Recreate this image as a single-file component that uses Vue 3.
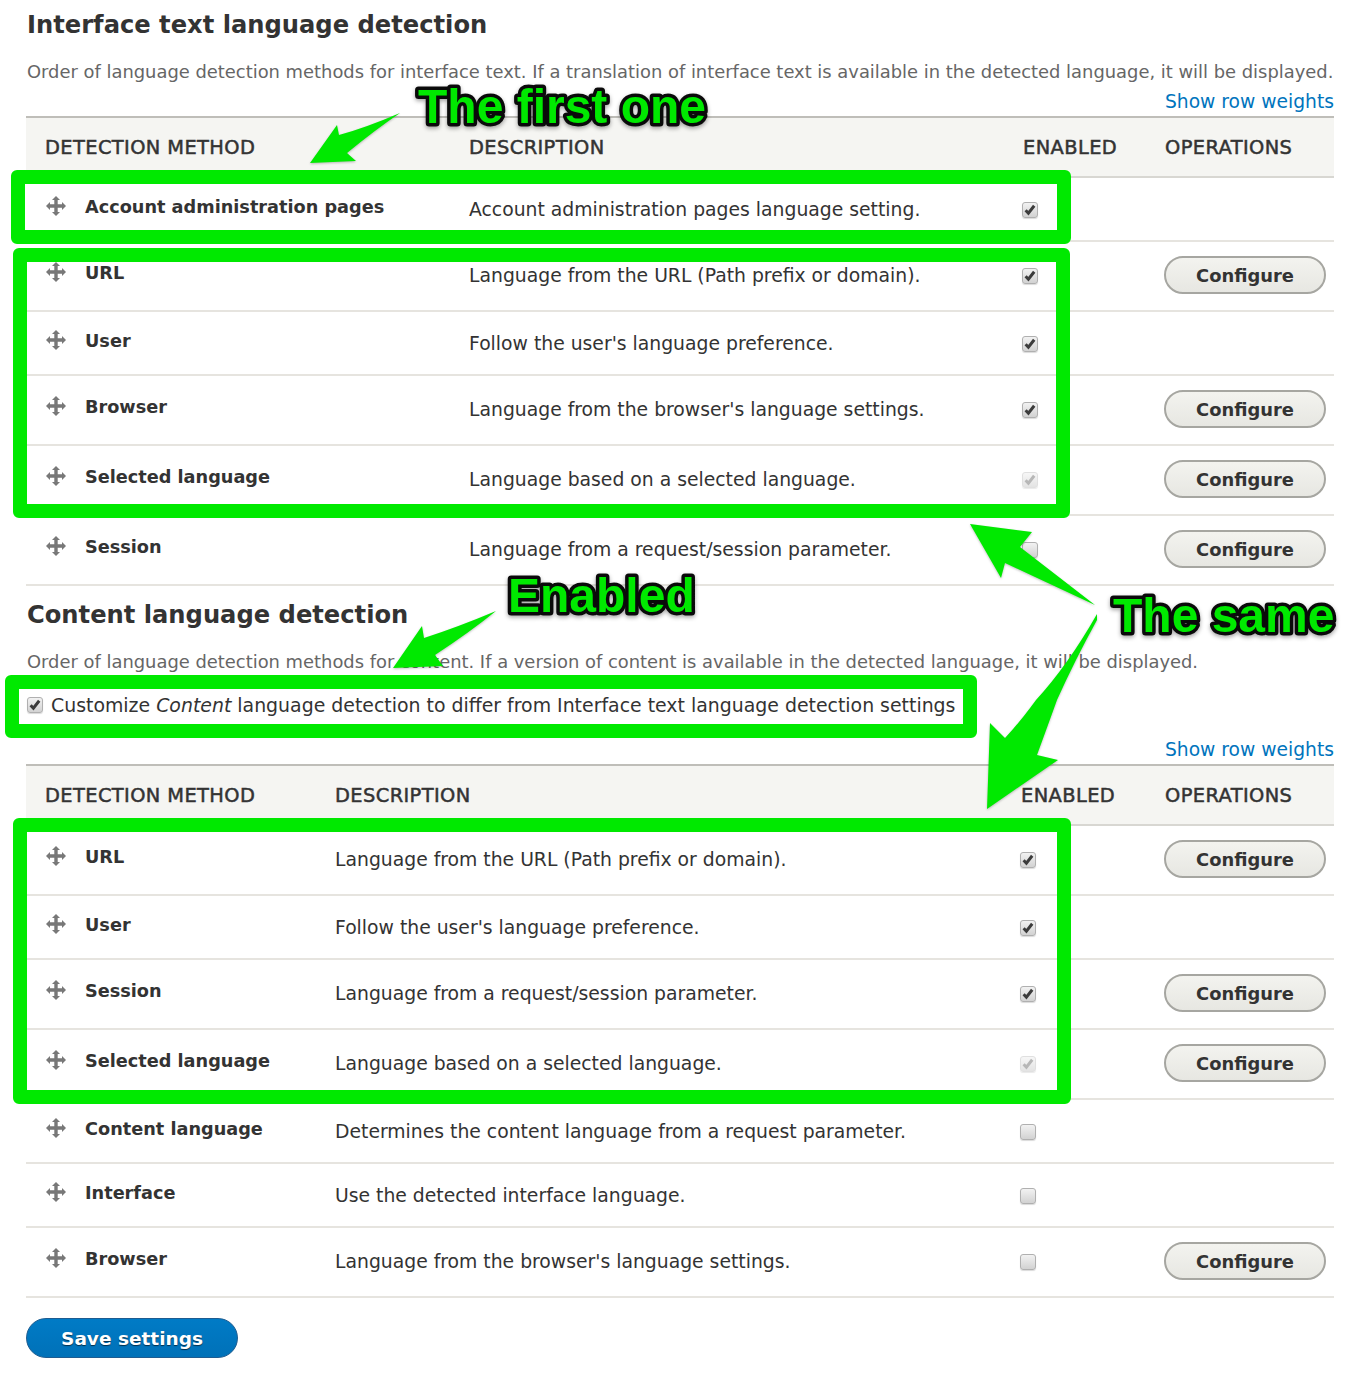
<script setup>
const first = [
  { t: 'Account administration pages', d: 'Account administration pages language setting.', c: 'on', b: false },
  { t: 'URL', d: 'Language from the URL (Path prefix or domain).', c: 'on', b: true },
  { t: 'User', d: "Follow the user's language preference.", c: 'on', b: false },
  { t: 'Browser', d: "Language from the browser's language settings.", c: 'on', b: true },
  { t: 'Selected language', d: 'Language based on a selected language.', c: 'dis', b: true },
  { t: 'Session', d: 'Language from a request/session parameter.', c: 'off', b: true },
]
const second = [
  { t: 'URL', d: 'Language from the URL (Path prefix or domain).', c: 'on', b: true },
  { t: 'User', d: "Follow the user's language preference.", c: 'on', b: false },
  { t: 'Session', d: 'Language from a request/session parameter.', c: 'on', b: true },
  { t: 'Selected language', d: 'Language based on a selected language.', c: 'dis', b: true },
  { t: 'Content language', d: 'Determines the content language from a request parameter.', c: 'off', b: false },
  { t: 'Interface', d: 'Use the detected interface language.', c: 'off', b: false },
  { t: 'Browser', d: "Language from the browser's language settings.", c: 'off', b: true },
]
const tables = [
  { cls: 'wide', rows: first },
  { cls: 'narrow', rows: second },
]
const handle = 'M10 0 L14 4 L11.7 4 L11.7 8.3 L16 8.3 L16 6 L20 10 L16 14 L16 11.7 L11.7 11.7 L11.7 16 L14 16 L10 20 L6 16 L8.3 16 L8.3 11.7 L4 11.7 L4 14 L0 10 L4 6 L4 8.3 L8.3 8.3 L8.3 4 L6 4 Z'
</script>

<template>
  <div class="page">
    <h2 class="title">Interface text language detection</h2>
    <p class="desc">Order of language detection methods for interface text. If a translation of interface text is available in the detected language, it will be displayed.</p>
    <div class="weights"><a>Show row weights</a></div>
    <div class="table" :class="tables[0].cls">
      <div class="row head">
        <div>Detection method</div><div>Description</div><div>Enabled</div><div>Operations</div>
      </div>
      <div v-for="r in tables[0].rows" :key="r.t" class="row" :class="{ tall: r.b }">
        <div class="name">
          <svg class="handle" viewBox="0 0 20 20"><path :d="handle" /></svg>
          <span>{{ r.t }}</span>
        </div>
        <div class="text">{{ r.d }}</div>
        <div class="checkcell"><span class="check" :class="r.c"><svg v-if="r.c !== 'off'" viewBox="0 0 16 16"><path d="M3.6 8.2 L6.4 11.2 L12.2 3.8" /></svg></span></div>
        <div class="ops"><span v-if="r.b" class="btn">Configure</span></div>
      </div>
    </div>

    <h2 class="title second">Content language detection</h2>
    <p class="desc tight">Order of language detection methods for content. If a version of content is available in the detected language, it will be displayed.</p>
    <label class="customize">
      <span class="check on"><svg viewBox="0 0 16 16"><path d="M3.6 8.2 L6.4 11.2 L12.2 3.8" /></svg></span>
      <span>Customize <em>Content</em> language detection to differ from Interface text language detection settings</span>
    </label>
    <div class="weights two"><a>Show row weights</a></div>
    <div class="table" :class="tables[1].cls">
      <div class="row head">
        <div>Detection method</div><div>Description</div><div>Enabled</div><div>Operations</div>
      </div>
      <div v-for="r in tables[1].rows" :key="r.t" class="row" :class="{ tall: r.b }">
        <div class="name">
          <svg class="handle" viewBox="0 0 20 20"><path :d="handle" /></svg>
          <span>{{ r.t }}</span>
        </div>
        <div class="text">{{ r.d }}</div>
        <div class="checkcell"><span class="check" :class="r.c"><svg v-if="r.c !== 'off'" viewBox="0 0 16 16"><path d="M3.6 8.2 L6.4 11.2 L12.2 3.8" /></svg></span></div>
        <div class="ops"><span v-if="r.b" class="btn">Configure</span></div>
      </div>
    </div>
    <div class="actions"><span class="save">Save settings</span></div>

    <div class="box b1"></div>
    <div class="box b2"></div>
    <div class="box b3"></div>
    <div class="box b4"></div>
    <svg class="arrows" viewBox="0 0 1366 1382">
      <path d="M400 113 Q365 128 339 135 L337 125 L310 163 L356 161 L347 153 Q375 130 400 113 Z" />
      <path d="M496 611 Q458 627 424 638 L422 626 L393 668 L443 666 L435 655 Q470 632 496 611 Z" />
      <path d="M1095 605 L1005 563 L1001 578 L970 524 L1032 532 L1020 547 Z" />
      <path d="M1097 614 Q1068 665 1036 700 Q1020 722 1005 738 L990 723 L987 809 L1058 760 L1037 755 Q1048 725 1057 700 Q1075 660 1097 620 Z" />
      <text x="418" y="123">The first one</text>
      <text x="508" y="612">Enabled</text>
      <text x="1113" y="632">The same</text>
    </svg>
  </div>
</template>

<style>
body { background: #fff; }
</style>

<style scoped>
.page {
  position: relative;
  box-sizing: border-box;
  width: 1366px;
  height: 1382px;
  padding: 0 32px 0 26px;
  font-family: "DejaVu Sans", sans-serif;
  font-size: 18.8px;
  color: #333;
  overflow: hidden;
}
.title {
  margin: 0;
  height: 48px;
  line-height: 48px;
  padding-left: 1px;
  font-size: 24.2px;
  font-weight: 700;
  color: #333;
}
.title:first-child { line-height: 50px; }
.title.second { margin-top: 5px; }
.desc {
  margin: 9px 0 0;
  height: 28px;
  line-height: 30px;
  padding-left: 1px;
  font-size: 17.9px;
  color: #666;
  white-space: nowrap;
}
.desc.tight { margin-top: 8px; }
.weights {
  margin-top: 2px;
  height: 29px;
  line-height: 30px;
  text-align: right;
  font-size: 18.7px;
  color: #0074bd;
}
.weights.two { margin-top: 16px; }
.table { display: flex; flex-direction: column; }
.row {
  display: grid;
  align-items: center;
  min-height: 62px;
  border-bottom: 2px solid #e6e4df;
}
.wide .row { grid-template-columns: 424px 554px 142px 188px; }
.narrow .row { grid-template-columns: 290px 686px 144px 188px; }
.row > div { padding-left: 19px; }
.row > .text { margin-top: -2px; }
.row:not(.tall):not(.head) > .text,
.row:not(.tall):not(.head) > .name { padding-top: 2px; }
.head {
  min-height: 58px;
  border-top: 2px solid #bfbeb9;
  border-bottom: 2px solid #d8d7d2;
  background: #f5f5f2;
  font-size: 19.4px;
  letter-spacing: 0.4px;
  text-transform: uppercase;
  -webkit-text-stroke: 0.5px #333;
}
.name {
  display: flex;
  align-items: center;
  gap: 19px;
  font-size: 17.7px;
  font-weight: 700;
  margin-top: -6px;
}
.handle { width: 20px; height: 20px; flex: none; margin: -3px 0 0 1px; }
.handle path { fill: #787878; }
.checkcell { display: flex; }
.row:not(.tall) > .checkcell { padding-top: 2px; }
.wide .checkcell, .narrow .checkcell { padding-left: 18px !important; }
.check {
  display: block;
  width: 16px;
  height: 16px;
  box-sizing: border-box;
  border: 1px solid #b0b0b0;
  border-radius: 3px;
  background: linear-gradient(#f2f2f2, #d2d2d2);
  box-shadow: 0 1px 1px rgba(0, 0, 0, 0.15);
  flex: none;
  position: relative;
}
.check svg { position: absolute; left: -1px; top: -1px; width: 16px; height: 16px; }
.check path { fill: none; stroke: #3c3c3c; stroke-width: 3; }
.check.dis { opacity: 0.6; border-color: #ccc; }
.check.dis path { stroke: #888; }
.ops { padding-left: 18px !important; padding-top: 14px; padding-bottom: 16px; display: flex; min-height: 0; }
.btn {
  box-sizing: border-box;
  width: 162px;
  height: 38px;
  line-height: 36px;
  text-align: center;
  border: 2px solid #a6a6a1;
  border-radius: 20px;
  background: linear-gradient(#f3f3ef, #e7e7e2);
  font-size: 17.9px;
  font-weight: 700;
  color: #333;
}
.customize {
  display: flex;
  align-items: center;
  gap: 8px;
  height: 28px;
  margin-top: 16px;
  color: #333;
  white-space: nowrap;
  padding-left: 1px;
  font-size: 18.9px;
}
.actions { margin-top: 20px; }
.save {
  display: block;
  box-sizing: border-box;
  width: 212px;
  height: 40px;
  line-height: 40px;
  text-align: center;
  border: 1px solid #1e5c90;
  border-radius: 20px;
  background: linear-gradient(#007bc6, #0071b8);
  color: #fff;
  font-size: 18.5px;
  font-weight: 700;
  text-shadow: 0 1px 1px rgba(0, 0, 0, 0.6);
}
.box {
  position: absolute;
  box-sizing: border-box;
  border: 14px solid #00e900;
  border-radius: 6px;
}
.b1 { left: 11px; top: 170px; width: 1060px; height: 74px; }
.b2 { left: 13px; top: 248px; width: 1057px; height: 270px; }
.b3 { left: 5px; top: 675px; width: 972px; height: 63px; }
.b4 { left: 13px; top: 818px; width: 1058px; height: 286px; }
.arrows {
  position: absolute;
  left: 0;
  top: 0;
  width: 1366px;
  height: 1382px;
  pointer-events: none;
}
.arrows path { fill: #00e900; filter: drop-shadow(0 1px 1px rgba(0, 0, 0, 0.25)); }
.arrows text {
  font-family: "Liberation Sans", sans-serif;
  font-size: 48px;
  font-weight: 700;
  fill: #00e900;
  stroke: #0a0a0a;
  stroke-width: 7px;
  stroke-linejoin: round;
  paint-order: stroke fill;
  filter: drop-shadow(0 2px 2px rgba(0, 0, 0, 0.35));
}
</style>
